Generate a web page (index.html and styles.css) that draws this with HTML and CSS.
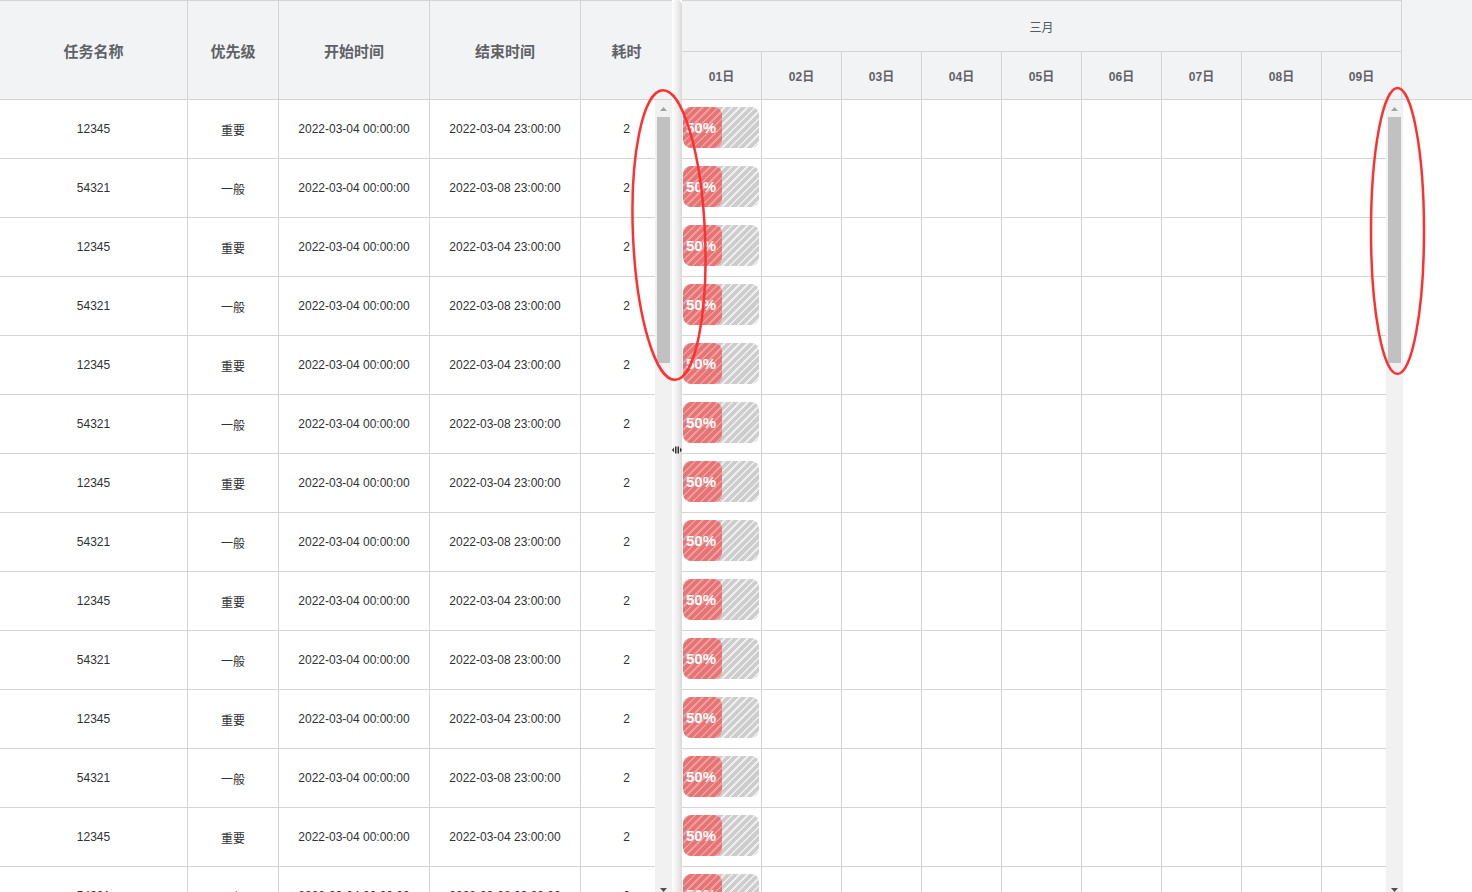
FILE: index.html
```html
<!DOCTYPE html>
<html lang="zh">
<head>
<meta charset="utf-8">
<title>Gantt</title>
<link rel="stylesheet" href="styles.css">
</head>
<body>
<div class="app">
  <section class="left">
    <div class="lhead">
      <div class="hc c1">任务名称</div>
      <div class="hc c2">优先级</div>
      <div class="hc c3">开始时间</div>
      <div class="hc c4">结束时间</div>
      <div class="hc c5">耗时</div>
    </div>
    <div class="lbody">
      <div class="row"><div class="cell c1">12345</div><div class="cell c2">重要</div><div class="cell c3">2022-03-04 00:00:00</div><div class="cell c4">2022-03-04 23:00:00</div><div class="cell c5">2</div></div>
      <div class="row"><div class="cell c1">54321</div><div class="cell c2">一般</div><div class="cell c3">2022-03-04 00:00:00</div><div class="cell c4">2022-03-08 23:00:00</div><div class="cell c5">2</div></div>
      <div class="row"><div class="cell c1">12345</div><div class="cell c2">重要</div><div class="cell c3">2022-03-04 00:00:00</div><div class="cell c4">2022-03-04 23:00:00</div><div class="cell c5">2</div></div>
      <div class="row"><div class="cell c1">54321</div><div class="cell c2">一般</div><div class="cell c3">2022-03-04 00:00:00</div><div class="cell c4">2022-03-08 23:00:00</div><div class="cell c5">2</div></div>
      <div class="row"><div class="cell c1">12345</div><div class="cell c2">重要</div><div class="cell c3">2022-03-04 00:00:00</div><div class="cell c4">2022-03-04 23:00:00</div><div class="cell c5">2</div></div>
      <div class="row"><div class="cell c1">54321</div><div class="cell c2">一般</div><div class="cell c3">2022-03-04 00:00:00</div><div class="cell c4">2022-03-08 23:00:00</div><div class="cell c5">2</div></div>
      <div class="row"><div class="cell c1">12345</div><div class="cell c2">重要</div><div class="cell c3">2022-03-04 00:00:00</div><div class="cell c4">2022-03-04 23:00:00</div><div class="cell c5">2</div></div>
      <div class="row"><div class="cell c1">54321</div><div class="cell c2">一般</div><div class="cell c3">2022-03-04 00:00:00</div><div class="cell c4">2022-03-08 23:00:00</div><div class="cell c5">2</div></div>
      <div class="row"><div class="cell c1">12345</div><div class="cell c2">重要</div><div class="cell c3">2022-03-04 00:00:00</div><div class="cell c4">2022-03-04 23:00:00</div><div class="cell c5">2</div></div>
      <div class="row"><div class="cell c1">54321</div><div class="cell c2">一般</div><div class="cell c3">2022-03-04 00:00:00</div><div class="cell c4">2022-03-08 23:00:00</div><div class="cell c5">2</div></div>
      <div class="row"><div class="cell c1">12345</div><div class="cell c2">重要</div><div class="cell c3">2022-03-04 00:00:00</div><div class="cell c4">2022-03-04 23:00:00</div><div class="cell c5">2</div></div>
      <div class="row"><div class="cell c1">54321</div><div class="cell c2">一般</div><div class="cell c3">2022-03-04 00:00:00</div><div class="cell c4">2022-03-08 23:00:00</div><div class="cell c5">2</div></div>
      <div class="row"><div class="cell c1">12345</div><div class="cell c2">重要</div><div class="cell c3">2022-03-04 00:00:00</div><div class="cell c4">2022-03-04 23:00:00</div><div class="cell c5">2</div></div>
      <div class="row"><div class="cell c1">54321</div><div class="cell c2">一般</div><div class="cell c3">2022-03-04 00:00:00</div><div class="cell c4">2022-03-08 23:00:00</div><div class="cell c5">2</div></div>
      <div class="vscroll lscroll">
        <div class="sb-btn"><svg width="7" height="4" viewBox="0 0 7 4"><path d="M3.5 0L7 4H0z" fill="#a3a3a3"/></svg></div>
        <div class="sb-track"><div class="sb-thumb"></div></div>
        <div class="sb-btn"><svg width="7" height="4" viewBox="0 0 7 4"><path d="M0 0H7L3.5 4z" fill="#505050"/></svg></div>
      </div>
    </div>
  </section>

  <div class="splitter">
    <svg class="grip" width="10" height="8" viewBox="0 0 10 8"><path d="M0 4L2 1.5V6.5z M8 1.5L10 4L8 6.5z" fill="#333"/><path d="M3.5 0.5V7.5M5 0.5V7.5M6.5 0.5V7.5" stroke="#333" stroke-width="1"/></svg>
  </div>

  <section class="gantt">
    <div class="ghead">
      <div class="ghead-table">
        <div class="month">三月</div>
        <div class="days">
          <div class="day">01日</div><div class="day">02日</div><div class="day">03日</div><div class="day">04日</div><div class="day">05日</div><div class="day">06日</div><div class="day">07日</div><div class="day">08日</div><div class="day">09日</div>
        </div>
      </div>
    </div>
    <div class="gbody">
      <div class="gwrap">
        <div class="grow"><div class="gcell"><div class="bar"><div class="prog">50%</div></div></div><div class="gcell"></div><div class="gcell"></div><div class="gcell"></div><div class="gcell"></div><div class="gcell"></div><div class="gcell"></div><div class="gcell"></div><div class="gcell"></div></div>
        <div class="grow"><div class="gcell"><div class="bar"><div class="prog">50%</div></div></div><div class="gcell"></div><div class="gcell"></div><div class="gcell"></div><div class="gcell"></div><div class="gcell"></div><div class="gcell"></div><div class="gcell"></div><div class="gcell"></div></div>
        <div class="grow"><div class="gcell"><div class="bar"><div class="prog">50%</div></div></div><div class="gcell"></div><div class="gcell"></div><div class="gcell"></div><div class="gcell"></div><div class="gcell"></div><div class="gcell"></div><div class="gcell"></div><div class="gcell"></div></div>
        <div class="grow"><div class="gcell"><div class="bar"><div class="prog">50%</div></div></div><div class="gcell"></div><div class="gcell"></div><div class="gcell"></div><div class="gcell"></div><div class="gcell"></div><div class="gcell"></div><div class="gcell"></div><div class="gcell"></div></div>
        <div class="grow"><div class="gcell"><div class="bar"><div class="prog">50%</div></div></div><div class="gcell"></div><div class="gcell"></div><div class="gcell"></div><div class="gcell"></div><div class="gcell"></div><div class="gcell"></div><div class="gcell"></div><div class="gcell"></div></div>
        <div class="grow"><div class="gcell"><div class="bar"><div class="prog">50%</div></div></div><div class="gcell"></div><div class="gcell"></div><div class="gcell"></div><div class="gcell"></div><div class="gcell"></div><div class="gcell"></div><div class="gcell"></div><div class="gcell"></div></div>
        <div class="grow"><div class="gcell"><div class="bar"><div class="prog">50%</div></div></div><div class="gcell"></div><div class="gcell"></div><div class="gcell"></div><div class="gcell"></div><div class="gcell"></div><div class="gcell"></div><div class="gcell"></div><div class="gcell"></div></div>
        <div class="grow"><div class="gcell"><div class="bar"><div class="prog">50%</div></div></div><div class="gcell"></div><div class="gcell"></div><div class="gcell"></div><div class="gcell"></div><div class="gcell"></div><div class="gcell"></div><div class="gcell"></div><div class="gcell"></div></div>
        <div class="grow"><div class="gcell"><div class="bar"><div class="prog">50%</div></div></div><div class="gcell"></div><div class="gcell"></div><div class="gcell"></div><div class="gcell"></div><div class="gcell"></div><div class="gcell"></div><div class="gcell"></div><div class="gcell"></div></div>
        <div class="grow"><div class="gcell"><div class="bar"><div class="prog">50%</div></div></div><div class="gcell"></div><div class="gcell"></div><div class="gcell"></div><div class="gcell"></div><div class="gcell"></div><div class="gcell"></div><div class="gcell"></div><div class="gcell"></div></div>
        <div class="grow"><div class="gcell"><div class="bar"><div class="prog">50%</div></div></div><div class="gcell"></div><div class="gcell"></div><div class="gcell"></div><div class="gcell"></div><div class="gcell"></div><div class="gcell"></div><div class="gcell"></div><div class="gcell"></div></div>
        <div class="grow"><div class="gcell"><div class="bar"><div class="prog">50%</div></div></div><div class="gcell"></div><div class="gcell"></div><div class="gcell"></div><div class="gcell"></div><div class="gcell"></div><div class="gcell"></div><div class="gcell"></div><div class="gcell"></div></div>
        <div class="grow"><div class="gcell"><div class="bar"><div class="prog">50%</div></div></div><div class="gcell"></div><div class="gcell"></div><div class="gcell"></div><div class="gcell"></div><div class="gcell"></div><div class="gcell"></div><div class="gcell"></div><div class="gcell"></div></div>
        <div class="grow"><div class="gcell"><div class="bar"><div class="prog">50%</div></div></div><div class="gcell"></div><div class="gcell"></div><div class="gcell"></div><div class="gcell"></div><div class="gcell"></div><div class="gcell"></div><div class="gcell"></div><div class="gcell"></div></div>
        <div class="vscroll rscroll">
          <div class="sb-btn"><svg width="7" height="4" viewBox="0 0 7 4"><path d="M3.5 0L7 4H0z" fill="#a3a3a3"/></svg></div>
          <div class="sb-track"><div class="sb-thumb"></div></div>
          <div class="sb-btn"><svg width="7" height="4" viewBox="0 0 7 4"><path d="M0 0H7L3.5 4z" fill="#505050"/></svg></div>
        </div>
      </div>
    </div>
  </section>

  <svg class="annot" width="1472" height="892" viewBox="0 0 1472 892">
    <ellipse cx="669" cy="235" rx="36" ry="145" transform="rotate(-2.5 669 235)" fill="none" stroke="#ff3030" stroke-width="2.5"/>
    <ellipse cx="1397.5" cy="231" rx="26.5" ry="143" fill="none" stroke="#ff3030" stroke-width="2.5"/>
  </svg>
</div>
</body>
</html>
```

FILE: styles.css
```css
* {
  box-sizing: border-box;
  margin: 0;
  padding: 0;
}

html, body {
  height: 100%;
  overflow: hidden;
  background: #fff;
}

body {
  font-family: "Liberation Sans", "Noto Sans CJK SC", sans-serif;
  color: #303133;
}

.app {
  display: flex;
  height: 892px;
  position: relative;
  overflow: hidden;
}

/* ---------- left table ---------- */
.left {
  width: 672px;
  flex: none;
  display: flex;
  flex-direction: column;
}

.lhead {
  display: flex;
  flex: none;
  height: 100px;
  background: #f2f3f5;
  border-top: 1px solid #d4d4d4;
  border-bottom: 1px solid #d4d4d4;
}

.hc {
  display: flex;
  align-items: center;
  justify-content: center;
  font-size: 15px;
  font-weight: bold;
  color: #606266;
  border-right: 1px solid #d4d4d4;
}

.c1 { width: 188px; }
.c2 { width: 91px; }
.c3 { width: 151px; }
.c4 { width: 151px; }
.c5 { width: 91px; border-right: none; }

.lbody {
  position: relative;
  flex: 1;
  overflow: hidden;
}

.row {
  display: flex;
  height: 59px;
  border-bottom: 1px solid #d4d4d4;
}

.cell {
  display: flex;
  align-items: center;
  justify-content: center;
  font-size: 12px;
  color: #303133;
  border-right: 1px solid #d4d4d4;
}

.cell.c5 { border-right: none; }

/* ---------- scrollbars ---------- */
.vscroll {
  position: absolute;
  top: 0;
  bottom: -6px;
  width: 17px;
  background: #f1f1f1;
  display: flex;
  flex-direction: column;
}

.lscroll { left: 655px; }
.rscroll { left: 704px; }

.sb-btn {
  height: 17px;
  flex: none;
  display: flex;
  align-items: center;
  justify-content: center;
}

.sb-btn svg { display: block; }

.sb-track {
  flex: 1;
  padding: 0 2px;
}

.sb-thumb {
  height: 246px;
  background: #c1c1c1;
}

/* ---------- splitter ---------- */
.splitter {
  width: 10px;
  flex: none;
  display: flex;
  align-items: center;
  justify-content: center;
  padding-top: 8px;
  border-radius: 5px 5px 0 0;
  background: linear-gradient(to right, #fdfdfd 0%, #eeeeee 55%, #d9d9d9 100%);
}

.grip { display: block; }

/* ---------- gantt ---------- */
.gantt {
  flex: 1;
  display: flex;
  flex-direction: column;
  min-width: 0;
}

.ghead {
  flex: none;
  height: 100px;
  background: #f2f3f5;
  border-bottom: 1px solid #d4d4d4;
}

.ghead-table {
  width: 720px;
  border-top: 1px solid #d4d4d4;
}

.month {
  height: 51px;
  display: flex;
  align-items: center;
  justify-content: center;
  font-size: 12px;
  color: #555a62;
  border-bottom: 1px solid #d4d4d4;
  border-right: 1px solid #d4d4d4;
}

.days {
  display: flex;
  height: 47px;
}

.day {
  width: 80px;
  display: flex;
  align-items: center;
  justify-content: center;
  font-size: 12px;
  font-weight: bold;
  color: #606266;
  border-right: 1px solid #d4d4d4;
}

.gbody {
  flex: 1;
  overflow: hidden;
}

.gwrap {
  position: relative;
  width: 720px;
  height: 100%;
}

.grow {
  display: flex;
  height: 59px;
  border-bottom: 1px solid #d4d4d4;
}

.gcell {
  width: 80px;
  flex: none;
  border-right: 1px solid #d4d4d4;
}

.bar {
  margin: 7px 0 0 1px;
  width: 76px;
  height: 41px;
  border-radius: 8px;
  overflow: hidden;
  display: flex;
  background: repeating-linear-gradient(-45deg, #cdcdcd 0 3.6px, #eeeeee 3.6px 5.4px);
}

.prog {
  width: 39px;
  height: 100%;
  border-radius: 8px;
  padding-left: 3px;
  display: flex;
  align-items: center;
  white-space: nowrap;
  font-size: 15px;
  font-weight: bold;
  color: #fff;
  background: repeating-linear-gradient(-45deg, #e57575 0 3.6px, #f09c9c 3.6px 5.4px);
}

/* ---------- annotation overlay ---------- */
.annot {
  position: absolute;
  left: 0;
  top: 0;
  pointer-events: none;
}
```
